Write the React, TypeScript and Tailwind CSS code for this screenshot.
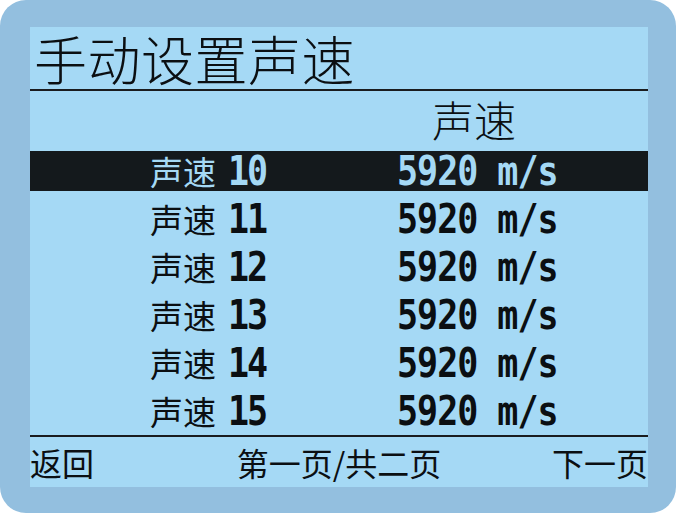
import React from 'react';

const cjk = { fontFamily: '"Noto Sans CJK SC", "Noto Sans", sans-serif' };
const mono = { fontFamily: '"DejaVu Sans Mono", "Liberation Mono", monospace' };

const rows = [10, 11, 12, 13, 14, 15];

function Row({ n, active }: { n: number; active: boolean }) {
  return (
    <div className="h-12 flex items-center">
      <div
        className={`h-10 w-full flex items-center ${active ? 'bg-[#14191c] text-[#a5d9f5]' : 'text-[#0b0f12]'}`}
      >
        <div className="w-[367px] pl-[120px] flex items-center">
          <span className="text-[33px] leading-none" style={cjk}>
            声速
          </span>
          <span
            className="inline-block ml-[12px] text-[35px] leading-none font-bold tracking-[-2px] scale-y-[1.15]"
            style={mono}
          >
            {n}
          </span>
        </div>
        <span
          className="inline-block text-[35px] leading-none font-bold tracking-[-1px] whitespace-pre scale-y-[1.15]"
          style={mono}
        >
          5920 m/s
        </span>
      </div>
    </div>
  );
}

export default function App() {
  return (
    <div className="w-[676px] h-[513px] bg-white">
      <div className="w-full h-full rounded-[26px] bg-[#93bfdf] pt-[27px] pl-[30px]">
        <div className="w-[618px] h-[460px] bg-[#a5d9f5] flex flex-col text-[#0b0f12]">
          {/* Title */}
          <div className="h-16 flex items-center pl-[4px] border-b-2 border-[#1a1c1e]">
            <span className="text-[53px] leading-none font-light tracking-[0.5px]" style={cjk}>
              手动设置声速
            </span>
          </div>

          {/* Column header */}
          <div className="h-[56px] flex items-center pl-[402px]">
            <span className="text-[42px] leading-none font-light" style={cjk}>
              声速
            </span>
          </div>

          {/* Speed list */}
          <div className="flex flex-col border-b-2 border-[#1a1c1e]">
            {rows.map((n) => (
              <Row key={n} n={n} active={n === 10} />
            ))}
          </div>

          {/* Footer */}
          <div className="flex-1 flex items-center justify-between text-[32px] leading-none" style={cjk}>
            <span>返回</span>
            <span className="ml-[32px]">第一页/共二页</span>
            <span>下一页</span>
          </div>
        </div>
      </div>
    </div>
  );
}
